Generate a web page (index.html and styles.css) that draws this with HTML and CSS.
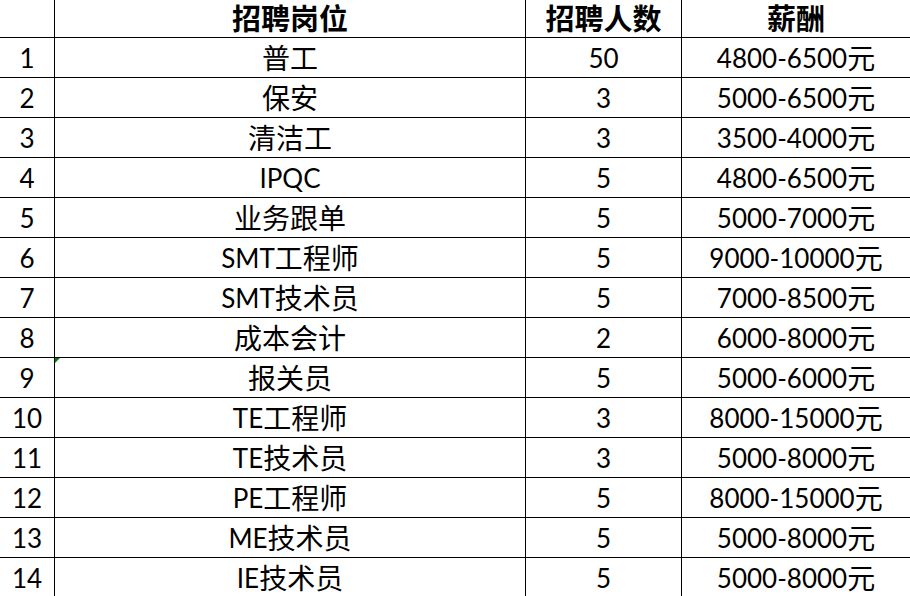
FILE: index.html
```html
<!DOCTYPE html>
<html lang="zh-CN">
<head>
<meta charset="utf-8">
<title>招聘岗位</title>
<link rel="stylesheet" href="styles.css">
</head>
<body>
<div class="sheet">
  <div class="row head">
    <div class="cell c1"></div>
    <div class="cell c2">招聘岗位</div>
    <div class="cell c3">招聘人数</div>
    <div class="cell c4">薪酬</div>
  </div>
  <div class="row"><div class="cell c1">1</div><div class="cell c2"><span class="zh">普工</span></div><div class="cell c3">50</div><div class="cell c4">4800-6500<span class="zh">元</span></div></div>
  <div class="row"><div class="cell c1">2</div><div class="cell c2"><span class="zh">保安</span></div><div class="cell c3">3</div><div class="cell c4">5000-6500<span class="zh">元</span></div></div>
  <div class="row"><div class="cell c1">3</div><div class="cell c2"><span class="zh">清洁工</span></div><div class="cell c3">3</div><div class="cell c4">3500-4000<span class="zh">元</span></div></div>
  <div class="row"><div class="cell c1">4</div><div class="cell c2">IPQC</div><div class="cell c3">5</div><div class="cell c4">4800-6500<span class="zh">元</span></div></div>
  <div class="row"><div class="cell c1">5</div><div class="cell c2"><span class="zh">业务跟单</span></div><div class="cell c3">5</div><div class="cell c4">5000-7000<span class="zh">元</span></div></div>
  <div class="row"><div class="cell c1">6</div><div class="cell c2">SMT<span class="zh">工程师</span></div><div class="cell c3">5</div><div class="cell c4">9000-10000<span class="zh">元</span></div></div>
  <div class="row"><div class="cell c1">7</div><div class="cell c2">SMT<span class="zh">技术员</span></div><div class="cell c3">5</div><div class="cell c4">7000-8500<span class="zh">元</span></div></div>
  <div class="row"><div class="cell c1">8</div><div class="cell c2"><span class="zh">成本会计</span></div><div class="cell c3">2</div><div class="cell c4">6000-8000<span class="zh">元</span></div></div>
  <div class="row"><div class="cell c1">9</div><div class="cell c2"><span class="flag"></span><span class="zh">报关员</span></div><div class="cell c3">5</div><div class="cell c4">5000-6000<span class="zh">元</span></div></div>
  <div class="row"><div class="cell c1">10</div><div class="cell c2">TE<span class="zh">工程师</span></div><div class="cell c3">3</div><div class="cell c4">8000-15000<span class="zh">元</span></div></div>
  <div class="row"><div class="cell c1">11</div><div class="cell c2">TE<span class="zh">技术员</span></div><div class="cell c3">3</div><div class="cell c4">5000-8000<span class="zh">元</span></div></div>
  <div class="row"><div class="cell c1">12</div><div class="cell c2">PE<span class="zh">工程师</span></div><div class="cell c3">5</div><div class="cell c4">8000-15000<span class="zh">元</span></div></div>
  <div class="row"><div class="cell c1">13</div><div class="cell c2">ME<span class="zh">技术员</span></div><div class="cell c3">5</div><div class="cell c4">5000-8000<span class="zh">元</span></div></div>
  <div class="row"><div class="cell c1">14</div><div class="cell c2">IE<span class="zh">技术员</span></div><div class="cell c3">5</div><div class="cell c4">5000-8000<span class="zh">元</span></div></div>
</div>
</body>
</html>
```
FILE: styles.css
```css
html, body {
  margin: 0;
  padding: 0;
  background: #fff;
  overflow: hidden;
}
.sheet {
  width: 910px;
  font-family: Lato, "Noto Sans CJK SC", sans-serif;
  font-size: 26px;
  color: #000;
}
.row {
  display: grid;
  grid-template-columns: 55px 471px 156px 228px;
  height: 40px;
}
.row.head {
  height: 38px;
}
.cell {
  border-right: 1px solid #000;
  border-bottom: 1px solid #000;
  display: flex;
  align-items: flex-end;
  justify-content: center;
  padding-bottom: 6px;
  line-height: 1;
  position: relative;
  white-space: nowrap;
}
.zh {
  font-size: 28px;
  line-height: 1;
  position: relative;
  top: 1px;
}
.head .cell {
  font-size: 29px;
  font-weight: 700;
  padding-bottom: 4px;
}
.c4 {
  border-right: none;
}
.flag {
  position: absolute;
  left: 0;
  top: 0;
  width: 0;
  height: 0;
  border-top: 5px solid #008000;
  border-right: 5px solid transparent;
}
```
